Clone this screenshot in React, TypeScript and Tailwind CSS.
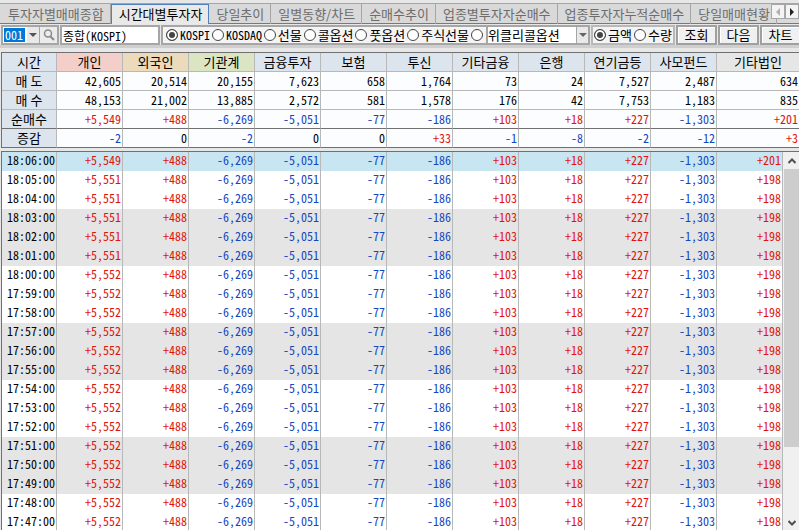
import { useState } from "react";
import clsx from "clsx";

const TABS = [
  "투자자별매매종합",
  "시간대별투자자",
  "당일추이",
  "일별동향/차트",
  "순매수추이",
  "업종별투자자순매수",
  "업종투자자누적순매수",
  "당일매매현황",
];

const MARKETS = ["KOSPI", "KOSDAQ", "선물", "콜옵션", "풋옵션", "주식선물"];

const COLUMNS = [
  { name: "개인", color: "bg-[#f4cfca]" },
  { name: "외국인", color: "bg-[#ecdabc]" },
  { name: "기관계", color: "bg-[#dbe5c4]" },
  { name: "금융투자", color: "bg-[#dce4ee]" },
  { name: "보험", color: "bg-[#dce4ee]" },
  { name: "투신", color: "bg-[#dce4ee]" },
  { name: "기타금융", color: "bg-[#dce4ee]" },
  { name: "은행", color: "bg-[#dce4ee]" },
  { name: "연기금등", color: "bg-[#dce4ee]" },
  { name: "사모펀드", color: "bg-[#dce4ee]" },
  { name: "기타법인", color: "bg-[#e6e6e6]" },
];

const SUMMARY = [
  { label: "매 도", values: ["42,605", "20,514", "20,155", "7,623", "658", "1,764", "73", "24", "7,527", "2,487", "634"] },
  { label: "매 수", values: ["48,153", "21,002", "13,885", "2,572", "581", "1,578", "176", "42", "7,753", "1,183", "835"] },
  { label: "순매수", values: ["+5,549", "+488", "-6,269", "-5,051", "-77", "-186", "+103", "+18", "+227", "-1,303", "+201"] },
  { label: "증감", values: ["-2", "0", "-2", "0", "0", "+33", "-1", "-8", "-2", "-12", "+3"] },
];

const TIMES = [
  ["18:06:00", "+5,549", "+201"],
  ["18:05:00", "+5,551", "+198"],
  ["18:04:00", "+5,551", "+198"],
  ["18:03:00", "+5,551", "+198"],
  ["18:02:00", "+5,551", "+198"],
  ["18:01:00", "+5,551", "+198"],
  ["18:00:00", "+5,552", "+198"],
  ["17:59:00", "+5,552", "+198"],
  ["17:58:00", "+5,552", "+198"],
  ["17:57:00", "+5,552", "+198"],
  ["17:56:00", "+5,552", "+198"],
  ["17:55:00", "+5,552", "+198"],
  ["17:54:00", "+5,552", "+198"],
  ["17:53:00", "+5,552", "+198"],
  ["17:52:00", "+5,552", "+198"],
  ["17:51:00", "+5,552", "+198"],
  ["17:50:00", "+5,552", "+198"],
  ["17:49:00", "+5,552", "+198"],
  ["17:48:00", "+5,552", "+198"],
  ["17:47:00", "+5,552", "+198"],
];

const MIDDLE = ["+488", "-6,269", "-5,051", "-77", "-186", "+103", "+18", "+227", "-1,303"];

const NUM = "font-['Noto_Sans_Mono_CJK_KR','Liberation_Sans_Narrow','Noto_Sans_CJK_KR',monospace] text-xs";

const valueColor = (value: string) => {
  if (value.startsWith("+")) return "text-[#e0140a]";
  if (value.startsWith("-")) return "text-[#1446be]";
  return "text-black";
};

const rowColor = (index: number) => {
  if (index === 0) return "bg-[#c8e6f2]";
  return Math.floor(index / 3) % 2 === 1 ? "bg-[#e5e5e5]" : "bg-white";
};

const Triangle = ({ className, points }: { className: string; points: string }) => (
  <svg viewBox="0 0 8 8" className={clsx("size-2", className)} aria-hidden="true">
    <polygon points={points} fill="currentColor" />
  </svg>
);

const Columns = () => (
  <colgroup>
    <col className="w-[55px]" />
    {COLUMNS.map((column, index) => (
      <col key={column.name} className={index < COLUMNS.length - 1 ? "w-[66px]" : undefined} />
    ))}
  </colgroup>
);

const TabBar = () => {
  const [active, setActive] = useState(TABS[1]);

  return (
    <nav className="relative mt-[3px] flex h-[21px] shrink-0 overflow-hidden border-t border-[#a6a6a6] bg-[#d9d9d9] pl-px shadow-[inset_0_-1px_0_#4f81bd]">
      {TABS.map((tab) => (
        <button
          key={tab}
          type="button"
          onClick={() => setActive(tab)}
          className={clsx(
            "shrink-0 border-r pr-[6px] pl-[7px] leading-[18px] whitespace-nowrap",
            tab === active
              ? "border-l border-[#4f81bd] bg-[#e9e9e9] text-black shadow-[inset_0_1px_0_#4f81bd]"
              : "border-[#a6a6a6] text-[#6c6c6c]",
          )}
        >
          {tab}
        </button>
      ))}
      <div className="absolute top-0 right-0 flex h-[15px]">
        <button type="button" aria-label="이전 탭" className="flex w-[14px] items-center justify-center border border-[#a6a6a6] bg-[#f4f4f4] text-[#b0b0b0]">
          <Triangle className="shrink-0" points="6,0 2,4 6,8" />
        </button>
        <button type="button" aria-label="다음 탭" className="flex w-[14px] items-center justify-center border border-[#a6a6a6] bg-[#f4f4f4] text-[#222222]">
          <Triangle className="shrink-0" points="2,0 6,4 2,8" />
        </button>
      </div>
    </nav>
  );
};

const Radio = ({ name, label, value, checked, onChange }: { name: string; label?: string; value: string; checked: boolean; onChange: (value: string) => void }) => (
  <label className="flex items-center gap-[2px] whitespace-nowrap">
    <input
      type="radio"
      name={name}
      aria-label={label ? undefined : value}
      checked={checked}
      onChange={() => onChange(value)}
      className="size-3 shrink-0 appearance-none rounded-full border border-[#444444] bg-white checked:bg-[#444444] checked:shadow-[inset_0_0_0_2px_white]"
    />
    {label && <span className={/^[A-Z]/.test(label) ? NUM : undefined}>{label}</span>}
  </label>
);

const Toolbar = () => {
  const [market, setMarket] = useState("KOSPI");
  const [unit, setUnit] = useState("금액");

  return (
    <form className="flex h-6 shrink-0 items-start gap-px border-b-[3px] border-[#cfcfcf] pt-px pl-px" onSubmit={(event) => event.preventDefault()}>
      <div className="flex h-5 w-[58px] shrink-0 border-2 border-[#a6a6a6] bg-white">
        <input aria-label="업종코드" defaultValue="001" className={clsx(NUM, "my-px ml-px w-[21px] bg-[#0078d7] px-px leading-[14px] text-white")} />
        <button type="button" aria-label="업종 목록" className="ml-[2px] flex w-[13px] items-center justify-center border-r border-[#a6a6a6] bg-[#e9e9e9] text-[#555555]">
          <Triangle className="shrink-0" points="0,2 8,2 4,6" />
        </button>
        <button type="button" aria-label="업종 검색" className="flex flex-1 items-center justify-center bg-[#ececec]">
          <svg viewBox="0 0 12 12" className="size-3" fill="none" stroke="#8a8a8a" aria-hidden="true">
            <circle cx="5" cy="4.5" r="3.5" strokeWidth="1.5" />
            <path d="M7.5 7.5 11 11" strokeWidth="2" />
          </svg>
        </button>
      </div>
      <input aria-label="업종명" readOnly value="종합(KOSPI)" className={clsx(NUM, "h-5 w-[100px] shrink-0 border-2 border-[#a6a6a6] bg-white px-px leading-4")} />
      <fieldset className="flex h-5 w-[325px] shrink-0 items-center justify-between border-2 border-r-0 border-[#a6a6a6] bg-[#f4f4f4] px-[3px]">
        {MARKETS.map((name) => (
          <Radio key={name} name="market" label={name} value={name} checked={market === name} onChange={setMarket} />
        ))}
        <Radio name="market" value="위클리옵션" checked={market === "위클리옵션"} onChange={setMarket} />
      </fieldset>
      <div className="relative -ml-px h-5 w-[104px] shrink-0">
        <select aria-label="옵션 종류" className="size-full appearance-none border-2 border-[#a6a6a6] bg-white leading-4">
          <option>위클리콜옵션</option>
          <option>위클리풋옵션</option>
        </select>
        <span className="pointer-events-none absolute inset-y-[2px] right-[2px] flex w-3 items-center justify-center border-l border-[#a6a6a6] bg-[#e9e9e9] text-[#666666]">
          <Triangle className="shrink-0" points="0,2 8,2 4,6" />
        </span>
      </div>
      <fieldset className="flex h-5 w-[84px] shrink-0 items-center justify-between border-2 border-[#b8b8b8] bg-[#f4f4f4] px-px">
        {["금액", "수량"].map((name) => (
          <Radio key={name} name="unit" label={name} value={name} checked={unit === name} onChange={setUnit} />
        ))}
      </fieldset>
      {["조회", "다음", "차트"].map((name) => (
        <button key={name} type="button" className="h-5 w-[41px] shrink-0 border-2 border-[#a0a0a0] bg-[#f0f0f0] leading-4 shadow-[inset_1px_1px_0_white]">
          {name}
        </button>
      ))}
    </form>
  );
};

const SummaryTable = () => (
  <table className="w-full shrink-0 table-fixed border-separate border-spacing-0 border-t border-l border-[#707070]">
    <Columns />
    <thead>
      <tr className="h-[19px]">
        <th scope="col" className="border-r border-b border-[#b8b8b8] bg-[#dce4ee] p-0 leading-[18px] font-normal">시간</th>
        {COLUMNS.map((column) => (
          <th key={column.name} scope="col" className={clsx("border-b border-[#b8b8b8] p-0 leading-[18px] font-normal not-last:border-r", column.color)}>
            {column.name}
          </th>
        ))}
      </tr>
    </thead>
    <tbody>
      {SUMMARY.map((row, index) => (
        <tr key={row.label} className={clsx("h-[19px]", index < 2 ? "*:border-b-[#b8b8b8]" : "*:border-b-[#707070]")}>
          <th scope="row" className="border-r border-b border-r-[#b8b8b8] bg-[#dce4ee] p-0 leading-[18px] font-normal">{row.label}</th>
          {row.values.map((value, column) => (
            <td key={column} className={clsx(NUM, "border-b border-r-[#b8b8b8] bg-[#fcfdff] p-0 pr-px text-right leading-[18px] not-last:border-r", valueColor(value))}>
              {value}
            </td>
          ))}
        </tr>
      ))}
    </tbody>
  </table>
);

const TimeTable = () => (
  <table className="min-w-0 flex-1 table-fixed border-separate border-spacing-0 self-start">
    <Columns />
    <tbody>
      {TIMES.map(([time, personal, corporate], index) => (
        <tr key={time} className={clsx("h-[19px]", rowColor(index))}>
          <th scope="row" className={clsx(NUM, "border-r border-[#b8b8b8] p-0 pr-px pb-[3px] text-right leading-4 font-normal")}>{time}</th>
          {[personal, ...MIDDLE, corporate].map((value, column) => (
            <td key={column} className={clsx(NUM, "border-r border-[#b8b8b8] p-0 pr-px pb-[3px] text-right leading-4", valueColor(value))}>
              {value}
            </td>
          ))}
        </tr>
      ))}
    </tbody>
  </table>
);

const ScrollBar = () => (
  <div className="flex w-4 shrink-0 flex-col bg-[#f0f0f0] pl-px">
    <button type="button" aria-label="위로" className="flex h-[17px] shrink-0 items-center justify-center">
      <svg viewBox="0 0 8 6" className="h-[6px] w-2" fill="none" stroke="#505050" strokeWidth="2" aria-hidden="true">
        <path d="M0.5 5 4 1.5 7.5 5" />
      </svg>
    </button>
    <div className="min-h-0 flex-1">
      <div className="h-4/5 bg-[#cdcdcd]" />
    </div>
    <button type="button" aria-label="아래로" className="flex h-[14px] shrink-0 items-center justify-center">
      <svg viewBox="0 0 8 6" className="h-[6px] w-2" fill="none" stroke="#505050" strokeWidth="2" aria-hidden="true">
        <path d="M0.5 1 4 4.5 7.5 1" />
      </svg>
    </button>
  </div>
);

export default function App() {
  return (
    <main className="flex h-screen flex-col overflow-hidden bg-[#e7e7e7] font-['Noto_Sans_CJK_KR',sans-serif] text-[13px] text-black">
      <TabBar />
      <Toolbar />
      <section className="flex min-h-0 flex-1 flex-col gap-[3px] pt-1 pl-px">
        <SummaryTable />
        <div className="flex min-h-0 flex-1 overflow-hidden border-t border-l border-[#707070]">
          <TimeTable />
          <ScrollBar />
        </div>
      </section>
    </main>
  );
}
